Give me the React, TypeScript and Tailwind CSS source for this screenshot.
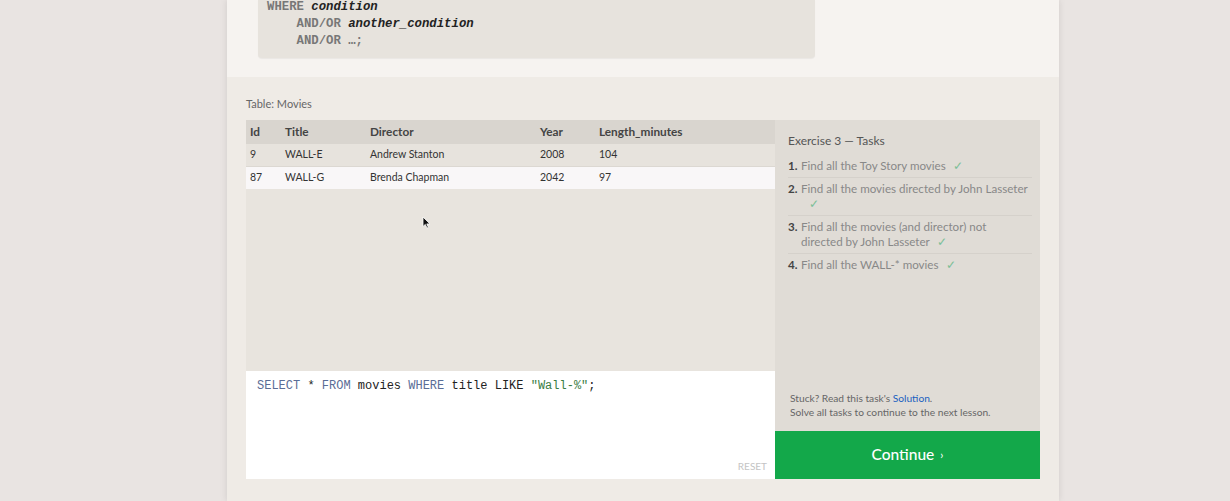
import React from 'react'

const font = { fontFamily: 'Lato, "Open Sans", sans-serif' }
const mono = { fontFamily: '"Liberation Mono", "Courier New", monospace' }

interface Movie {
  id: number
  title: string
  director: string
  year: number
  length: number
}

const MOVIES: Movie[] = [
  { id: 9, title: 'WALL-E', director: 'Andrew Stanton', year: 2008, length: 104 },
  { id: 87, title: 'WALL-G', director: 'Brenda Chapman', year: 2042, length: 97 },
]

// wrap: 'check' puts the tick on its own line, any other string is a second line of text
const TASKS: { text: string; wrap?: string }[] = [
  { text: 'Find all the Toy Story movies' },
  { text: 'Find all the movies directed by John Lasseter', wrap: 'check' },
  { text: 'Find all the movies (and director) not', wrap: 'directed by John Lasseter' },
  { text: 'Find all the WALL-* movies' },
]

function Check() {
  return <span className="ml-[7px] text-[#7cbf97]">✓</span>
}

function QueryBlock() {
  return (
    <div className="h-[77px] bg-[#f6f3f0] pl-[31px]">
      <div className="h-[58px] w-[557px] overflow-hidden rounded-b-sm bg-[#e7e3dd] pl-[9px] shadow-[0_1px_1px_rgba(0,0,0,0.05)]">
        <pre className="-mt-[1px] text-[12.3px] font-bold leading-[17px] text-[#777]" style={mono}>
          WHERE <i className="text-[#222]">condition</i>
          {'\n'}    AND/OR <i className="text-[#222]">another_condition</i>
          {'\n'}    AND/OR …;
        </pre>
      </div>
    </div>
  )
}

function MoviesTable() {
  return (
    <div className="h-[251px] bg-[#e8e4de]">
      <div className="flex h-[24px] items-center bg-[#d9d5cf] text-[11.8px] font-bold text-[#444]">
        <div className="w-[39px] pl-[4px]">Id</div>
        <div className="w-[85px]">Title</div>
        <div className="w-[170px]">Director</div>
        <div className="w-[59px]">Year</div>
        <div>Length_minutes</div>
      </div>
      {MOVIES.map((m, i) => (
        <div
          key={m.id}
          className={
            i === 1
              ? 'flex h-[23px] items-center border-t border-[#dcd8d2] bg-[#f9f7f8] text-[10.5px] text-[#333]'
              : 'flex h-[22px] items-center bg-[#e7e3dd] text-[10.5px] text-[#333]'
          }
        >
          <div className="w-[39px] pl-[4px]">{m.id}</div>
          <div className="w-[85px]">{m.title}</div>
          <div className="w-[170px]">{m.director}</div>
          <div className="w-[59px]">{m.year}</div>
          <div>{m.length}</div>
        </div>
      ))}
    </div>
  )
}

function Editor() {
  return (
    <div className="relative h-[108px] bg-white pl-[11px] pt-[7px]">
      <div className="text-[12px] leading-[16px] text-[#222]" style={mono}>
        <span className="text-[#5a6d96]">SELECT</span> * <span className="text-[#5a6d96]">FROM</span> movies{' '}
        <span className="text-[#5a6d96]">WHERE</span> title LIKE <span className="text-[#3a7d44]">"Wall-%"</span>;
      </div>
      <div className="absolute bottom-[5px] right-[8px] text-[10px] text-[#c4c4c4]">RESET</div>
    </div>
  )
}

function TaskPanel() {
  return (
    <div className="flex h-[311px] flex-col bg-[#e0dcd6] pl-[13px] pr-[8px]">
      <div className="mt-[12px] text-[12px] text-[#555]">Exercise 3 — Tasks</div>
      <ol className="mt-[5px] text-[11.6px] leading-[15.5px] text-[#888]">
        {TASKS.map((t, i) => (
          <li
            key={i}
            className={
              i < TASKS.length - 1
                ? 'flex border-b border-[#d5d1cb] py-[3px]'
                : 'flex py-[3px]'
            }
          >
            <span className="w-[13px] shrink-0 font-bold text-[#444]">{i + 1}.</span>
            <span>
              {t.text}
              {!t.wrap && <Check />}
              {t.wrap === 'check' && (
                <span className="block pl-[1px]">
                  <Check />
                </span>
              )}
              {t.wrap && t.wrap !== 'check' && (
                <span className="block">
                  {t.wrap}
                  <Check />
                </span>
              )}
            </span>
          </li>
        ))}
      </ol>
      <div className="mt-auto mb-[12px] pl-[2px] text-[10.2px] leading-[14px] text-[#666]">
        <div>
          Stuck? Read this task's <span className="text-[#1a5fc0]">Solution</span>.
        </div>
        <div>Solve all tasks to continue to the next lesson.</div>
      </div>
    </div>
  )
}

function Cursor() {
  return (
    <svg className="absolute left-[422px] top-[216px]" width="9" height="13" viewBox="0 0 9 13">
      <path d="M1 1 L1 10.5 L3.3 8.4 L5 12 L6.4 11.4 L4.8 7.9 L8 7.9 Z" fill="#111" stroke="#fff" strokeWidth="0.8" />
    </svg>
  )
}

export default function App() {
  return (
    <div className="relative flex min-h-[501px] bg-[#e9e4e2] pl-[227px]" style={font}>
      <div className="w-[832px] shadow-[-2px_0_6px_rgba(0,0,0,0.06),2px_0_6px_rgba(0,0,0,0.05)]">
        <QueryBlock />
        <div className="h-[424px] bg-[#efebe6] px-[19px]">
          <div className="pt-[20px] text-[11px] leading-[14px] text-[#666]">Table: Movies</div>
          <div className="mt-[9px] flex">
            <div className="w-[529px]">
              <MoviesTable />
              <Editor />
            </div>
            <div className="w-[265px]">
              <TaskPanel />
              <div className="flex h-[48px] items-center justify-center bg-[#13a84a] text-[15.5px] font-medium text-white">
                Continue <span className="ml-[6px] text-[11px]">›</span>
              </div>
            </div>
          </div>
        </div>
      </div>
      <Cursor />
    </div>
  )
}
